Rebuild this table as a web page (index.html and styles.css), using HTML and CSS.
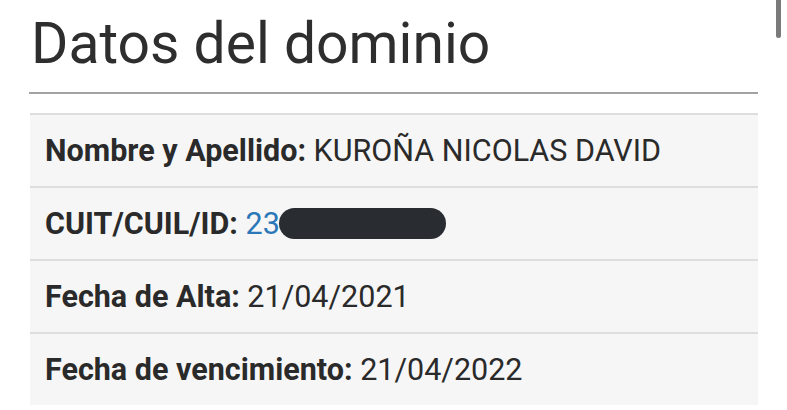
FILE: index.html
```html
<!DOCTYPE html>
<html lang="es">
<head>
<meta charset="utf-8">
<title>Datos del dominio</title>
<link rel="stylesheet" href="styles.css">
</head>
<body>
<div class="page">
  <h1 class="title">Datos del dominio</h1>
  <hr class="rule">
  <ul class="list">
    <li class="item"><b>Nombre y Apellido:</b>&nbsp;KUROÑA NICOLAS DAVID</li>
    <li class="item"><b>CUIT/CUIL/ID:</b>&nbsp;<span class="link">23</span><span class="redact"></span></li>
    <li class="item"><b>Fecha de Alta:</b>&nbsp;21/04/2021</li>
    <li class="item"><b>Fecha de vencimiento:</b>&nbsp;21/04/2022</li>
  </ul>
</div>
<div class="scrollbar"></div>
</body>
</html>
```

FILE: styles.css
```css
html, body {
  margin: 0;
  padding: 0;
  background: #ffffff;
  overflow: hidden;
}
body {
  font-family: Roboto, "Liberation Sans", sans-serif;
  color: #2b2b2b;
}
.page {
  width: 729px;
  margin-left: 29px;
}
.title {
  margin: 0;
  padding: 8px 0 0 2px;
  font-size: 57px;
  font-weight: 400;
  line-height: 72px;
  color: #2e2e2e;
}
.rule {
  margin: 12px 0 0 0;
  border: 0;
  height: 2px;
  background: #a3a3a3;
}
.list {
  list-style: none;
  margin: 19px 0 0 1px;
  padding: 0;
  background: #f6f6f6;
  border-top: 2px solid #dedede;
}
.item {
  display: flex;
  align-items: center;
  height: 71px;
  padding-left: 15px;
  border-bottom: 2px solid #dedede;
  font-size: 30.5px;
  color: #2a2a2a;
  white-space: nowrap;
}
.item b {
  font-weight: 700;
}
.item:last-child {
  border-bottom: 0;
}
.link {
  color: #2b77b8;
}
.redact {
  display: inline-block;
  width: 167px;
  height: 31px;
  border-radius: 16px;
  background: #292d31;
  margin-left: -1px;
}
.scrollbar {
  position: absolute;
  left: 776px;
  top: 0;
  width: 5px;
  height: 38px;
  border-radius: 0 0 3px 3px;
  background: #7a7a7a;
}
```
